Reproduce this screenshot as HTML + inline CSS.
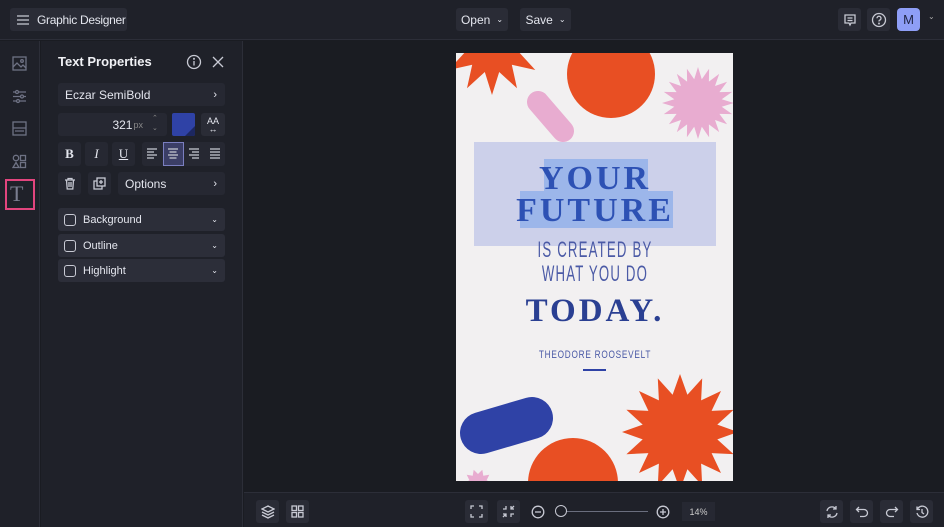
<!DOCTYPE html>
<html><head><meta charset="utf-8"><style>
*{box-sizing:border-box;margin:0;padding:0}
body{width:944px;height:527px;overflow:hidden;background:#1a1c22;font-family:"Liberation Sans",sans-serif;color:#d8dae2;position:relative}
.a{position:absolute}
.btn{position:absolute;background:#2a2c36;border-radius:3px;display:flex;align-items:center;justify-content:center;font-size:12px;color:#e4e6ee;white-space:nowrap}
svg{display:block}
.ic{stroke:#c8cad4;fill:none;stroke-width:1.3}
.ri{stroke:#6e7284;fill:none;stroke-width:1.3}
</style></head><body>
<div class="a" style="left:0;top:0;width:944px;height:40px;background:#1f2129;border-bottom:1px solid #2c2e38"></div>
<div class="btn" style="left:10px;top:8px;width:117px;height:23px;justify-content:flex-start;padding-left:6px">
<svg width="14" height="12" class="ic"><path d="M1 2h12M1 6h12M1 10h12"/></svg><span style="margin-left:7px;font-size:12px;letter-spacing:-0.3px">Graphic Designer</span></div>
<div class="btn" style="left:456px;top:8px;width:52px;height:23px">Open <span style="font-size:8px;margin-left:6px">&#8964;</span></div>
<div class="btn" style="left:520px;top:8px;width:51px;height:23px">Save <span style="font-size:8px;margin-left:6px">&#8964;</span></div>
<div class="btn" style="left:838px;top:8px;width:23px;height:23px"><svg width="14" height="14" class="ic"><path d="M2 2h10v8H8l-1 2-1-2H2z M4.5 5h5M4.5 7.5h5"/></svg></div>
<div class="btn" style="left:867px;top:8px;width:23px;height:23px"><svg width="16" height="16" class="ic"><circle cx="8" cy="8" r="6.5"/><path d="M6 6.3a2 2 0 1 1 2.5 1.9c-.5.2-.5.6-.5 1.3"/><circle cx="8" cy="11.5" r=".4"/></svg></div>
<div class="a" style="left:897px;top:8px;width:23px;height:23px;background:#8e9ef6;border-radius:4px;color:#1e2240;font-size:13px;display:flex;align-items:center;justify-content:center">M</div>
<div class="a" style="left:928px;top:12px;font-size:8px;color:#aaa">&#8964;</div>
<div class="a" style="left:0;top:41px;width:40px;height:486px;background:#1f2129;border-right:1px solid #2c2e38"></div>
<svg class="a ri" style="left:12px;top:56px" width="15" height="15"><rect x="1" y="1" width="13" height="13"/><path d="M1 11l4-4 4 4 2-2 3 3"/><circle cx="10" cy="5" r="1.3"/></svg>
<svg class="a ri" style="left:12px;top:89px" width="15" height="15"><path d="M1 3h13M1 7.5h13M1 12h13"/><circle cx="5" cy="3" r="1.5" fill="#1f2129"/><circle cx="10" cy="7.5" r="1.5" fill="#1f2129"/><circle cx="6" cy="12" r="1.5" fill="#1f2129"/></svg>
<svg class="a ri" style="left:12px;top:121px" width="15" height="15"><rect x="1" y="1" width="13" height="13"/><path d="M1 7h13M3 10h9"/></svg>
<svg class="a ri" style="left:12px;top:154px" width="15" height="15"><circle cx="4" cy="4" r="2.7"/><rect x="8.5" y="1.5" width="5" height="5"/><path d="M4 8.5l3 5H1z"/><rect x="8.5" y="8.5" width="5" height="5"/></svg>
<div class="a" style="left:5px;top:179px;width:30px;height:31px;border:2px solid #e2457e"></div>
<div class="a" style="left:10px;top:181px;font-family:'Liberation Serif',serif;font-size:22px;color:#7a7e90">T</div>
<div class="a" style="left:41px;top:41px;width:202px;height:486px;background:#1f2129;border-right:1px solid #2c2e38"></div>
<div class="a" style="left:58px;top:54px;font-size:13px;font-weight:bold;color:#f0f1f5">Text Properties</div>
<svg class="a ic" style="left:186px;top:54px" width="16" height="16"><circle cx="8" cy="8" r="6.5"/><path d="M8 7v4.5"/><circle cx="8" cy="4.8" r=".4"/></svg>
<svg class="a ic" style="left:212px;top:56px" width="12" height="12" stroke-width="1.5"><path d="M1 1l10 10M11 1L1 11"/></svg>
<div class="btn" style="left:58px;top:83px;width:167px;height:23px;justify-content:space-between;padding:0 8px 0 7px;background:#262832"><span>Eczar SemiBold</span><span style="font-size:11px">›</span></div>
<div class="btn" style="left:58px;top:113px;width:109px;height:23px;background:#262832;justify-content:flex-end;padding-right:24px;font-size:12px">321<span style="font-size:9px;color:#888;margin-left:1px">px</span></div>
<div class="a" style="left:152px;top:114px;font-size:7px;color:#888;line-height:10px">&#8963;<br>&#8964;</div>
<div class="a" style="left:172px;top:113px;width:23px;height:23px;background:#2f42a6;border-radius:2px;overflow:hidden"><div style="position:absolute;right:0;bottom:0;border-left:10px solid transparent;border-bottom:10px solid #1c2760"></div></div>
<div class="btn" style="left:201px;top:113px;width:24px;height:23px;font-size:9px;line-height:8px;flex-direction:column">AA<span style="font-size:9px">↔</span></div>
<div class="btn" style="left:58px;top:142px;width:23px;height:24px;font-family:'Liberation Serif',serif;font-weight:bold;font-size:13px;background:#262832">B</div>
<div class="btn" style="left:85px;top:142px;width:23px;height:24px;font-family:'Liberation Serif',serif;font-style:italic;font-size:13px;background:#262832">I</div>
<div class="btn" style="left:112px;top:142px;width:23px;height:24px;font-family:'Liberation Serif',serif;text-decoration:underline;font-size:13px;background:#262832">U</div>
<div class="a" style="left:142px;top:142px;width:83px;height:24px;background:#262832;border-radius:3px"></div>
<div class="a" style="left:163px;top:142px;width:21px;height:24px;background:#3b3e66;border:1px solid #7b7fc0"></div>
<svg class="a ic" style="left:146px;top:147px" width="78" height="14" stroke-width="1.1"><path d="M1 2h10M1 5h7M1 8h10M1 11h7"/><path d="M22 2h10M23.5 5h7M22 8h10M23.5 11h7"/><path d="M43 2h10M46 5h7M43 8h10M46 11h7"/><path d="M64 2h10M64 5h10M64 8h10M64 11h10"/></svg>
<div class="btn" style="left:58px;top:172px;width:23px;height:23px;background:#262832"><svg width="12" height="13" class="ic"><path d="M1 3h10M4 3V1.5h4V3M2.5 3l.7 9h5.6l.7-9M5 5v5M7 5v5"/></svg></div>
<div class="btn" style="left:88px;top:172px;width:23px;height:23px;background:#262832"><svg width="13" height="13" class="ic"><rect x="4" y="1" width="8" height="8"/><path d="M4 4H1v8h8V9M8 3v4M6 5h4"/></svg></div>
<div class="btn" style="left:118px;top:172px;width:107px;height:23px;justify-content:space-between;padding:0 8px 0 7px;background:#262832"><span>Options</span><span style="font-size:11px">›</span></div>
<div class="btn" style="left:58px;top:208px;width:167px;height:23px;background:#2c2e39;justify-content:flex-start;padding-left:6px;font-size:11px"><span style="width:12px;height:12px;border:1px solid #c8cad4;border-radius:3px;margin-right:7px"></span>Background<span style="margin-left:auto;margin-right:7px;font-size:8px">&#8964;</span></div>
<div class="btn" style="left:58px;top:234px;width:167px;height:23px;background:#2c2e39;justify-content:flex-start;padding-left:6px;font-size:11px"><span style="width:12px;height:12px;border:1px solid #c8cad4;border-radius:3px;margin-right:7px"></span>Outline<span style="margin-left:auto;margin-right:7px;font-size:8px">&#8964;</span></div>
<div class="btn" style="left:58px;top:259px;width:167px;height:23px;background:#2c2e39;justify-content:flex-start;padding-left:6px;font-size:11px"><span style="width:12px;height:12px;border:1px solid #c8cad4;border-radius:3px;margin-right:7px"></span>Highlight<span style="margin-left:auto;margin-right:7px;font-size:8px">&#8964;</span></div>
<div class="a" style="left:456px;top:53px;width:277px;height:428px;background:#f2f0f1;overflow:hidden">
<svg width="277" height="428" style="position:absolute;left:0;top:0">
<polygon id="s1" fill="#e84f23"/>
<circle cx="155" cy="21" r="44" fill="#e84f23"/>
<line x1="82" y1="49" x2="107" y2="78" stroke="#e8acd0" stroke-width="22" stroke-linecap="round"/>
<polygon id="s2" fill="#e8acd0"/>
<line x1="25" y1="380" x2="76" y2="365" stroke="#2f42a6" stroke-width="42" stroke-linecap="round"/>
<circle cx="117" cy="430" r="45" fill="#e84f23"/>
<polygon id="s3" fill="#e84f23"/>
<polygon id="s4" fill="#e8acd0"/>
<rect x="18" y="89" width="242" height="104" fill="#ccd0ea"/>
<rect x="88" y="106" width="104" height="38" fill="#9cb6ea"/>
<rect x="64" y="138" width="153" height="37" fill="#9cb6ea"/>
<text x="139" y="136" text-anchor="middle" font-family="Liberation Serif,serif" font-weight="bold" font-size="34" letter-spacing="3" fill="#2d51b4">YOUR</text>
<text x="139" y="168" text-anchor="middle" font-family="Liberation Serif,serif" font-weight="bold" font-size="34" letter-spacing="3" fill="#2d51b4">FUTURE</text>
<text x="139" y="204" text-anchor="middle" font-family="Liberation Sans,sans-serif" font-size="22" letter-spacing="2" fill="#4b5aa6" transform="translate(139 0) scale(0.6 1) translate(-139 0)">IS CREATED BY</text>
<text x="139" y="228" text-anchor="middle" font-family="Liberation Sans,sans-serif" font-size="22" letter-spacing="2" fill="#4b5aa6" transform="translate(139 0) scale(0.6 1) translate(-139 0)">WHAT YOU DO</text>
<text x="139" y="268" text-anchor="middle" font-family="Liberation Serif,serif" font-weight="bold" font-size="33" letter-spacing="3" fill="#2a3f92">TODAY.</text>
<text x="139" y="305" text-anchor="middle" font-family="Liberation Sans,sans-serif" font-size="11" letter-spacing="1" fill="#4b5aa6" transform="translate(139 0) scale(0.75 1) translate(-139 0)">THEODORE ROOSEVELT</text>
<rect x="127" y="316" width="23" height="2" fill="#2f42a6"/>
</svg></div>
<div class="a" style="left:244px;top:492px;width:700px;height:35px;background:#1f2129;border-top:1px solid #2c2e38"></div>
<div class="btn" style="left:256px;top:500px;width:23px;height:23px"><svg width="14" height="14" class="ic"><path d="M7 1l6 3-6 3-6-3z M1 7l6 3 6-3 M1 10l6 3 6-3"/></svg></div>
<div class="btn" style="left:286px;top:500px;width:23px;height:23px"><svg width="13" height="13" class="ic"><rect x="1" y="1" width="4.5" height="4.5"/><rect x="7.5" y="1" width="4.5" height="4.5"/><rect x="1" y="7.5" width="4.5" height="4.5"/><rect x="7.5" y="7.5" width="4.5" height="4.5"/></svg></div>
<div class="btn" style="left:465px;top:500px;width:23px;height:23px"><svg width="13" height="13" class="ic"><path d="M1 4V1h3M9 1h3v3M12 9v3H9M4 12H1V9"/></svg></div>
<div class="btn" style="left:497px;top:500px;width:23px;height:23px"><svg width="13" height="13" class="ic"><path d="M1 4h3V1M9 1v3h3M12 9H9v3M4 12V9H1M9 4l3-3M4 9l-3 3"/></svg></div>
<svg class="a ic" style="left:531px;top:505px" width="14" height="14"><circle cx="7" cy="7" r="5.8"/><path d="M4 7h6"/></svg>
<div class="a" style="left:566px;top:511px;width:82px;height:1px;background:#6a6e7e"></div>
<div class="a" style="left:555px;top:505px;width:12px;height:12px;border:1.3px solid #c8cad4;border-radius:50%;background:#1f2129"></div>
<svg class="a ic" style="left:656px;top:505px" width="14" height="14"><circle cx="7" cy="7" r="5.8"/><path d="M4 7h6M7 4v6"/></svg>
<div class="a" style="left:682px;top:502px;width:33px;height:19px;background:#262832;font-size:9px;display:flex;align-items:center;justify-content:center;color:#ccc">14%</div>
<div class="btn" style="left:820px;top:500px;width:23px;height:23px"><svg width="14" height="14" class="ic"><path d="M2 6a5 5 0 0 1 9-2M12 8a5 5 0 0 1-9 2M11 1v3H8M3 13v-3h3"/></svg></div>
<div class="btn" style="left:850px;top:500px;width:23px;height:23px"><svg width="14" height="14" class="ic"><path d="M4 2L1.5 4.5 4 7M1.5 4.5H9a3.5 3.5 0 0 1 0 7H5"/></svg></div>
<div class="btn" style="left:880px;top:500px;width:23px;height:23px"><svg width="14" height="14" class="ic"><path d="M10 2l2.5 2.5L10 7M12.5 4.5H5a3.5 3.5 0 0 0 0 7h4"/></svg></div>
<div class="btn" style="left:910px;top:500px;width:23px;height:23px"><svg width="14" height="14" class="ic"><path d="M2.5 4a5.5 5.5 0 1 1-.5 4M2 1.5V4.5h3M7 4v3.5l2 1.5"/></svg></div>
<script>
function star(id,cx,cy,ro,ri,n){var p=[];for(var i=0;i<2*n;i++){var r=i%2?ri:ro,a=Math.PI*i/n;p.push((cx+r*Math.cos(a)).toFixed(1)+','+(cy+r*Math.sin(a)).toFixed(1));}document.getElementById(id).setAttribute('points',p.join(' '));}
star('s1',36,-8,50,28,12);
star('s2',242,50,36,24,20);
star('s3',224,379,58,38,16);
star('s4',22,430,14,9,10);
</script>
</body></html>
